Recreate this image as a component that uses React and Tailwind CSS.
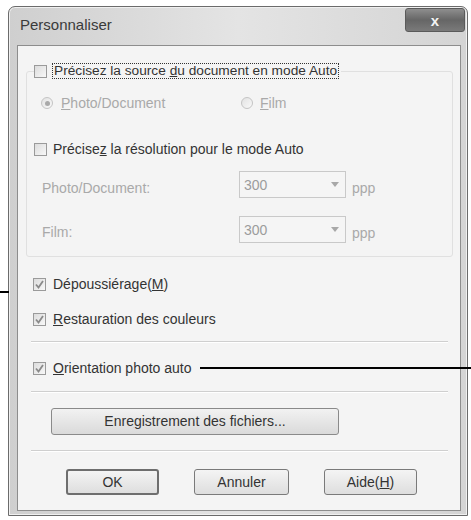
import React from "react";

function Check({ checked }) {
  return (
    <span className="relative inline-block w-[13px] h-[13px] shrink-0 border border-[#9a9a9a] bg-gradient-to-br from-[#dcdcdc] to-[#f8f8f8]">
      {checked && (
        <svg viewBox="0 0 13 13" className="absolute left-[-1px] top-[-1px] w-[13px] h-[13px]">
          <path d="M3 6.5 L5.5 9.5 L10 3" fill="none" stroke="#8a8a8a" strokeWidth="1.8" />
        </svg>
      )}
    </span>
  );
}

function Radio({ checked }) {
  return (
    <span className="relative inline-flex items-center justify-center w-[12px] h-[12px] shrink-0 rounded-full border border-[#c4c4c4] bg-gradient-to-br from-[#e2e2e2] to-[#f9f9f9]">
      {checked && <span className="w-[5px] h-[5px] rounded-full bg-[#a9a9a9]" />}
    </span>
  );
}

function Combo() {
  return (
    <div className="w-[107px] h-[27px] border border-[#c9c9c9] bg-[#f5f5f5] flex items-center justify-between pl-[4px] pr-[6px]">
      <span className="text-[14px] text-[#9c9c9c] leading-none">300</span>
      <svg viewBox="0 0 8 5" className="w-[8px] h-[5px]">
        <path d="M0 0 L8 0 L4 5 Z" fill="#a8a8a8" />
      </svg>
    </div>
  );
}

function Btn({ children, w, def }) {
  return (
    <div
      className={
        "h-[26px] flex items-center justify-center rounded-[3px] bg-gradient-to-b from-[#f4f4f4] to-[#dedede] text-[14px] text-[#333] " +
        (def ? "border-2 border-[#6e6e6e]" : "border border-[#7a7a7a]")
      }
      style={{ width: w }}
    >
      {children}
    </div>
  );
}

function Sep() {
  return <div className="ml-[13px] w-[417px] h-[2px] border-t border-[#cfcfcf] border-b border-b-white" />;
}

export default function App() {
  return (
    <div className="relative w-[471px] h-[520px] bg-white overflow-hidden font-['Liberation_Sans',Arial,sans-serif] pt-[6px]">
      <div className="ml-[8px] w-[460px] h-[510px] border border-[#6b6b6b] rounded-t-[7px] bg-gradient-to-r from-[#cfcfcf] via-[#e4e4e4] to-[#d4d4d4] flex flex-col shadow-[inset_0_0_0_1px_#f0f0f0]">
        <div className="h-[38px] flex items-start justify-between">
          <span className="ml-[11px] mt-[10px] text-[15px] text-[#3a3a3a] leading-none">Personnaliser</span>
          <div className="mt-[1px] mr-[2px] w-[60px] h-[24px] rounded-[3px] border border-[#5a5a5a] bg-gradient-to-b from-[#8e8e8e] via-[#666666] to-[#7a7a7a] flex items-center justify-center">
            <span className="text-[#f4f4f4] text-[15px] font-bold leading-none">x</span>
          </div>
        </div>
        <div className="ml-[8px] mr-[6px] mb-[4px] h-[466px] border border-[#8d8d8d] bg-[#f4f4f4] flex flex-col">
          {/* group box */}
          <div className="mt-[25px] ml-[8px] w-[427px] h-[186px] border border-[#e0e0e0] rounded-[3px] flex flex-col">
            <div className="-mt-[8px] ml-[7px] w-fit h-[14px] flex items-center bg-[#f4f4f4] pr-[2px]">
              <Check />
              <span className="ml-[5px] px-[1px] border border-dotted border-[#333] text-[13.7px] leading-[14px] text-[#333]">
                Précisez la source <u>d</u>u document en mode Auto
              </span>
            </div>
            <div className="mt-[18px] h-[14px] flex items-center">
              <span className="ml-[14px] flex items-center w-[200px]">
                <Radio checked />
                <span className="ml-[8px] text-[14px] text-[#a9a9a9] leading-none"><u>P</u>hoto/Document</span>
              </span>
              <span className="flex items-center">
                <Radio />
                <span className="ml-[7px] text-[14px] text-[#a9a9a9] leading-none"><u>F</u>ilm</span>
              </span>
            </div>
            <div className="mt-[32px] ml-[7px] h-[14px] flex items-center">
              <Check />
              <span className="ml-[6px] text-[14px] text-[#333] leading-none">Précise<u>z</u> la résolution pour le mode Auto</span>
            </div>
            <div className="mt-[15px] h-[27px] flex items-center">
              <span className="ml-[15px] w-[197px] text-[14px] text-[#a9a9a9] leading-none mt-[7px]">Photo/Document:</span>
              <Combo />
              <span className="ml-[6px] text-[14px] text-[#a9a9a9] leading-none mt-[7px]">ppp</span>
            </div>
            <div className="mt-[18px] h-[27px] flex items-center">
              <span className="ml-[15px] w-[197px] text-[14px] text-[#a9a9a9] leading-none mt-[4px]">Film:</span>
              <Combo />
              <span className="ml-[6px] text-[14px] text-[#a9a9a9] leading-none mt-[7px]">ppp</span>
            </div>
          </div>

          <div className="mt-[20px] ml-[15px] h-[14px] flex items-center">
            <Check checked />
            <span className="ml-[7px] text-[14px] text-[#333] leading-none">Dépoussiérage(<u>M</u>)</span>
          </div>
          <div className="mt-[21px] ml-[15px] h-[14px] flex items-center">
            <Check checked />
            <span className="ml-[7px] text-[14px] text-[#333] leading-none"><u>R</u>estauration des couleurs</span>
          </div>
          <div className="mt-[15px]"><Sep /></div>
          <div className="mt-[18px] ml-[15px] h-[14px] flex items-center">
            <Check checked />
            <span className="ml-[7px] text-[14px] text-[#333] leading-none"><u>O</u>rientation photo auto</span>
          </div>
          <div className="mt-[16px]"><Sep /></div>
          <div className="mt-[15px] ml-[33px]">
            <div className="w-[288px] h-[27px] flex items-center justify-center rounded-[3px] border border-[#8a8a8a] bg-gradient-to-b from-[#f2f2f2] to-[#dadada] text-[14px] text-[#333]">
              Enre<u>g</u>istrement des fichiers...
            </div>
          </div>
          <div className="mt-[15px]"><Sep /></div>
          <div className="mt-[17px] ml-[48px] flex gap-[35px]">
            <Btn w={93} def>OK</Btn>
            <Btn w={95}>Annuler</Btn>
            <Btn w={93}>Aide(<u>H</u>)</Btn>
          </div>
        </div>
      </div>
      {/* annotation lines */}
      <div className="absolute left-0 top-[291px] w-[9px] h-[2px] bg-black" />
      <div className="absolute left-[200px] top-[367px] w-[271px] h-[2px] bg-black" />
    </div>
  );
}
